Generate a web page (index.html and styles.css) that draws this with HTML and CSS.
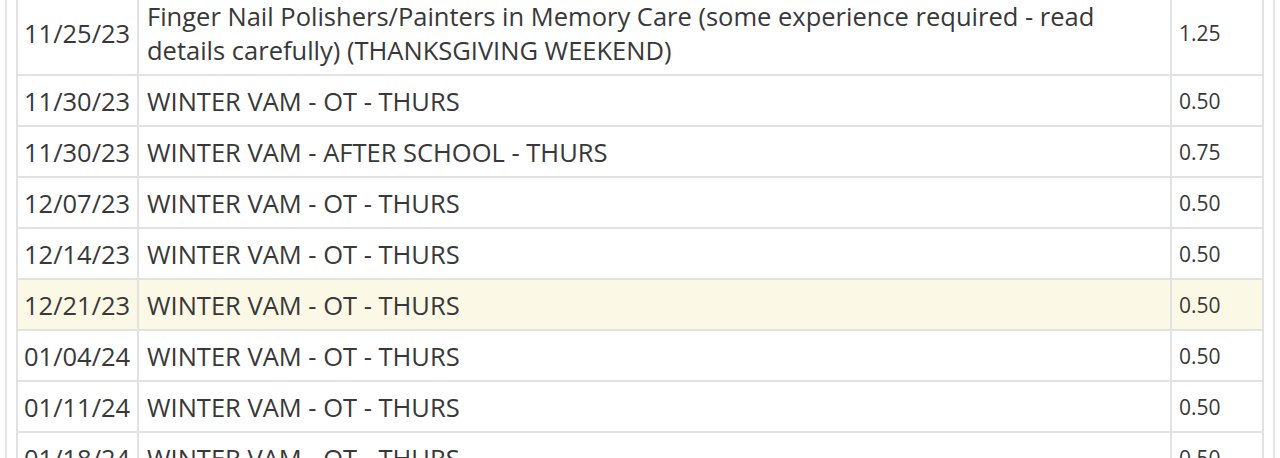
FILE: index.html
```html
<!DOCTYPE html>
<html>
<head>
<meta charset="utf-8">
<link rel="stylesheet" href="styles.css">
</head>
<body>
<div class="panel">
  <table class="hours">
    <colgroup>
      <col class="c-date">
      <col class="c-desc">
      <col class="c-hrs">
    </colgroup>
    <tbody>
      <tr><td class="date">11/25/23</td><td class="desc">Finger Nail Polishers/Painters in Memory Care (some experience required - read details carefully) (THANKSGIVING WEEKEND)</td><td class="hrs">1.25</td></tr>
      <tr><td class="date">11/30/23</td><td class="desc">WINTER VAM - OT - THURS</td><td class="hrs">0.50</td></tr>
      <tr><td class="date">11/30/23</td><td class="desc">WINTER VAM - AFTER SCHOOL - THURS</td><td class="hrs">0.75</td></tr>
      <tr><td class="date">12/07/23</td><td class="desc">WINTER VAM - OT - THURS</td><td class="hrs">0.50</td></tr>
      <tr><td class="date">12/14/23</td><td class="desc">WINTER VAM - OT - THURS</td><td class="hrs">0.50</td></tr>
      <tr class="warn"><td class="date">12/21/23</td><td class="desc">WINTER VAM - OT - THURS</td><td class="hrs">0.50</td></tr>
      <tr><td class="date">01/04/24</td><td class="desc">WINTER VAM - OT - THURS</td><td class="hrs">0.50</td></tr>
      <tr><td class="date">01/11/24</td><td class="desc">WINTER VAM - OT - THURS</td><td class="hrs">0.50</td></tr>
      <tr><td class="date">01/18/24</td><td class="desc">WINTER VAM - OT - THURS</td><td class="hrs">0.50</td></tr>
    </tbody>
  </table>
</div>
</body>
</html>
```
FILE: styles.css
```css
html, body {
  margin: 0;
  padding: 0;
  background: #fff;
  overflow: hidden;
}
body {
  font-family: "Open Sans", "Liberation Sans", sans-serif;
  color: #383838;
}
.panel {
  margin: -11px 5px 0 5px;
  border-left: 2px solid #e6e6e6;
  border-right: 2px solid #e6e6e6;
  padding: 0 9px;
  min-height: 600px;
}
.hours {
  width: 100%;
  border-collapse: collapse;
  table-layout: fixed;
}
.c-date { width: 121px; }
.c-hrs { width: 92px; }
.hours td {
  border: 2px solid #e2e2e2;
  padding: 8px 7px 7px 7px;
  font-size: 25.5px;
  line-height: 34px;
  vertical-align: middle;
}
.hours td.date {
  white-space: nowrap;
  padding-left: 6px;
  padding-right: 0;
}
.hours td.desc {
  padding-left: 8px;
}
.hours td.hrs {
  font-size: 21px;
  padding-left: 7px;
}
.hours tr.warn td {
  background: #fcf8e6;
}
```
